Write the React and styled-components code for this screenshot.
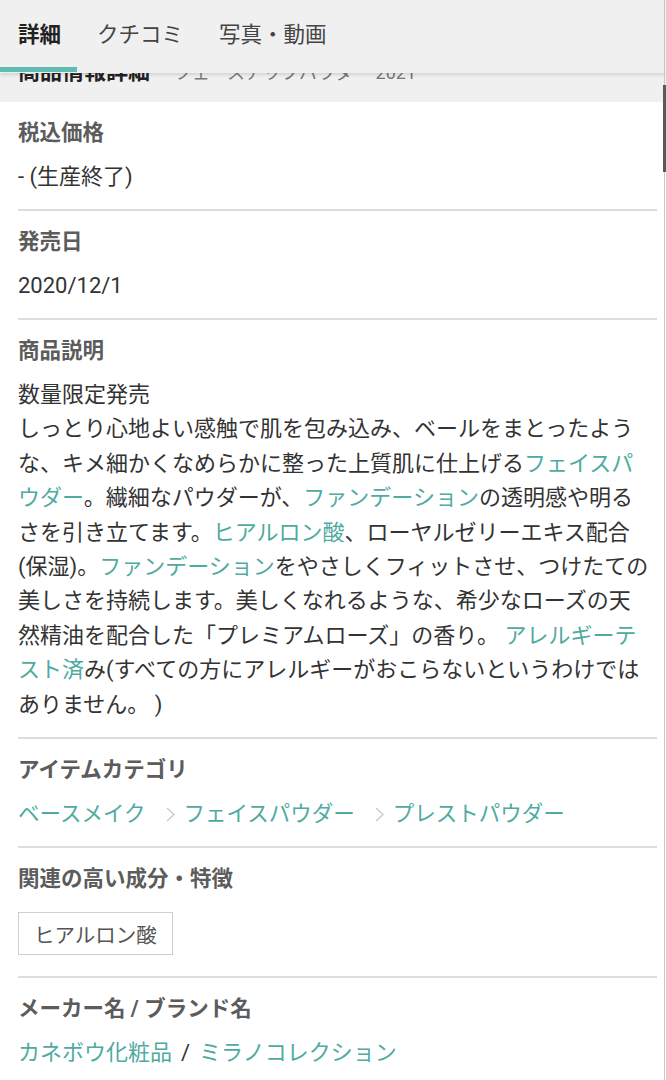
import React from "react";
import styled, { createGlobalStyle } from "styled-components";

const GlobalStyle = createGlobalStyle`
  html, body {
    margin: 0;
    padding: 0;
    background: #fff;
  }
  body {
    font-family: Roboto, "Noto Sans CJK JP", sans-serif;
    color: #333;
  }
`;

const TEAL = "#4fab9f";

const Page = styled.div`
  position: relative;
  width: 666px;
  min-height: 1080px;
  overflow: hidden;
  background: #fff;
`;

const TabBar = styled.nav`
  position: absolute;
  top: 0;
  left: 0;
  right: 0;
  height: 73px;
  display: flex;
  background: #f0f0f0;
  box-shadow: 0 2px 3px rgba(0, 0, 0, 0.12);
  z-index: 2;
`;

const Tab = styled.div`
  position: relative;
  padding: 0 18px;
  display: flex;
  align-items: center;
  height: 64px;
  font-size: 21.5px;
  font-weight: ${({ active }) => (active ? 700 : 400)};
  color: ${({ active }) => (active ? "#222" : "#444")};

  &::after {
    content: "";
    display: ${({ active }) => (active ? "block" : "none")};
    position: absolute;
    left: 0;
    right: 2px;
    top: 67px;
    height: 5px;
    background: #5fbcb1;
  }
`;

const TitleRow = styled.div`
  display: flex;
  align-items: baseline;
  gap: 24px;
  padding: 57px 18px 15px;
  background: #f0f0f0;
  white-space: nowrap;
`;

const Title = styled.span`
  font-size: 22px;
  line-height: 30px;
  font-weight: 700;
  color: #222;
`;

const SubTitle = styled.span`
  font-size: 18px;
  color: #777;
`;

const Scrollbar = styled.div`
  position: absolute;
  top: 0;
  bottom: 0;
  right: 1px;
  width: 1px;
  background: #c8c8c8;
  z-index: 3;

  &::after {
    content: "";
    position: absolute;
    top: 85px;
    height: 87px;
    left: -1px;
    width: 3px;
    background: #5a5a5a;
  }
`;

const Section = styled.section`
  margin: 0 9px 0 18px;
  padding: 16px 0 15px;
  border-top: ${({ first }) => (first ? "none" : "2px solid #dcdcdc")};
`;

const Label = styled.h3`
  margin: 0;
  font-size: 21.5px;
  line-height: 30px;
  font-weight: 700;
  color: #5c5c5c;
`;

const Value = styled.div`
  margin-top: 12px;
  padding-right: 5px;
  font-size: 22px;
  line-height: ${({ long }) => (long ? "34.4px" : "34px")};
  color: #333;
`;

const Link = styled.span`
  color: ${TEAL};
`;

const Crumbs = styled.div`
  display: flex;
  align-items: center;
  margin-top: 12px;
  font-size: 21.5px;
  line-height: 34px;
`;

const Chevron = styled.svg`
  width: 9px;
  height: 15px;
  margin: 0 9px 0 20px;
  flex: none;
`;

const Tag = styled.div`
  display: inline-flex;
  align-items: center;
  height: 41px;
  margin: 18px 0 6px;
  padding: 0 15px;
  border: 1px solid #cfcfcf;
  font-size: 20.5px;
  color: #555;
`;

const Slash = styled.span`
  margin: 0 9px;
  color: #333;
`;

const ChevronIcon = () => (
  <Chevron viewBox="0 0 9 15">
    <polyline points="1,1 8,7.5 1,14" fill="none" stroke="#c9c9c9" strokeWidth="1.3" />
  </Chevron>
);

const crumbs = ["ベースメイク", "フェイスパウダー", "プレストパウダー"];

export default function App() {
  return (
    <Page>
      <GlobalStyle />
      <TabBar>
        <Tab active>詳細</Tab>
        <Tab>クチコミ</Tab>
        <Tab>写真・動画</Tab>
      </TabBar>
      <Scrollbar />

      <TitleRow>
        <Title>商品情報詳細</Title>
        <SubTitle>フェースアップパウダー 2021</SubTitle>
      </TitleRow>

      <Section first>
        <Label>税込価格</Label>
        <Value>- (生産終了)</Value>
      </Section>

      <Section>
        <Label>発売日</Label>
        <Value>2020/12/1</Value>
      </Section>

      <Section>
        <Label>商品説明</Label>
        <Value long>
          数量限定発売
          <br />
          しっとり心地よい感触で肌を包み込み、ベールをまとったような、キメ細かくなめらかに整った上質肌に仕上げる
          <Link>フェイスパウダー</Link>。繊細なパウダーが、<Link>ファンデーション</Link>
          の透明感や明るさを引き立てます。<Link>ヒアルロン酸</Link>
          、ローヤルゼリーエキス配合(保湿)。<Link>ファンデーション</Link>
          をやさしくフィットさせ、つけたての美しさを持続します。美しくなれるような、希少なローズの天然精油を配合した「プレミアムローズ」の香り。{" "}
          <Link>アレルギーテスト済</Link>
          み(すべての方にアレルギーがおこらないというわけではありません。 )
        </Value>
      </Section>

      <Section>
        <Label>アイテムカテゴリ</Label>
        <Crumbs>
          {crumbs.map((c, i) => (
            <React.Fragment key={c}>
              {i > 0 && <ChevronIcon />}
              <Link>{c}</Link>
            </React.Fragment>
          ))}
        </Crumbs>
      </Section>

      <Section>
        <Label>関連の高い成分・特徴</Label>
        <Tag>ヒアルロン酸</Tag>
      </Section>

      <Section>
        <Label>メーカー名 / ブランド名</Label>
        <Value>
          <Link>カネボウ化粧品</Link>
          <Slash>/</Slash>
          <Link>ミラノコレクション</Link>
        </Value>
      </Section>
    </Page>
  );
}
